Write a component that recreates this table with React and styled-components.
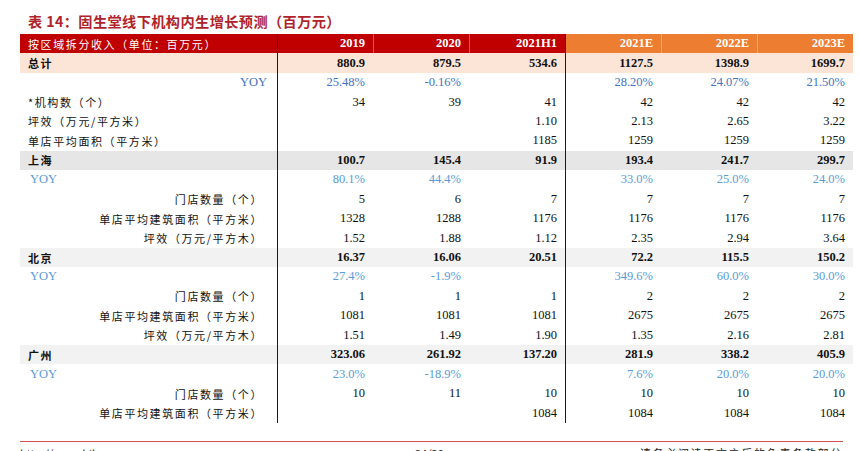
import React from 'react';
import styled, { createGlobalStyle } from 'styled-components';

const GlobalStyle = createGlobalStyle`
  html, body {
    margin: 0;
    padding: 0;
    background: #ffffff;
  }
`;

const Page = styled.div`
  width: 859px;
  height: 451px;
  overflow: hidden;
  padding: 0 6px 0 20px;
  box-sizing: border-box;
  font-family: "Liberation Serif", "Noto Sans CJK SC", serif;
`;

const Title = styled.h1`
  margin: 0;
  height: 34px;
  padding: 12px 0 0 8px;
  box-sizing: border-box;
  font-family: "Noto Sans CJK SC", sans-serif;
  font-size: 14.2px;
  line-height: 18px;
  font-weight: 700;
  color: #b0232a;
  letter-spacing: 0.4px;
`;

const Grid = styled.div`
  display: grid;
  grid-template-columns: 257px repeat(6, 96px);
  grid-auto-rows: 19.45px;
`;

const rowBg = {
  header: 'transparent',
  total: '#fce4d6',
  city: '#e6e6e6',
  cityLight: '#f2f2f2',
  plain: 'transparent',
};

const Cell = styled.div`
  display: flex;
  align-items: center;
  box-sizing: border-box;
  white-space: nowrap;
  background: ${p => rowBg[p.$row] || 'transparent'};
  border-left: ${p => (p.$divider ? '1px solid #1a1a1a' : p.$soft ? '1px solid rgba(255,255,255,0.35)' : 'none')};
`;

const LabelCell = styled(Cell)`
  justify-content: ${p => (p.$right ? 'flex-end' : 'flex-start')};
  padding: ${p => (p.$right ? `0 ${p.$pad}px 0 0` : `0 0 0 ${p.$pad}px`)};
  font-family: ${p => (p.$latin ? '"Liberation Serif", serif' : '"Noto Sans CJK SC", sans-serif')};
  font-size: ${p => (p.$latin ? '12.5px' : '11px')};
  letter-spacing: ${p => (p.$latin ? '0' : '1.6px')};
  font-weight: ${p => (p.$bold ? 700 : 400)};
  color: ${p => p.$color || '#111'};
  background: ${p => (p.$row === 'header' ? '#c00000' : rowBg[p.$row] || 'transparent')};
`;

const ValueCell = styled(Cell)`
  justify-content: flex-end;
  padding-right: 8px;
  font-family: "Liberation Serif", serif;
  font-size: 12.5px;
  font-weight: ${p => (p.$bold ? 700 : 400)};
  color: ${p => p.$color || '#111'};
  background: ${p =>
    p.$row === 'header' ? (p.$forecast ? '#ed7d31' : '#c00000') : rowBg[p.$row] || 'transparent'};
`;

const Footer = styled.div`
  margin: 18px 10px 0 0;
  border-top: 1px solid #d2504f;
  display: grid;
  grid-template-columns: 395px 1fr auto;
  padding-top: 4px;
  font-family: "Noto Sans CJK SC", sans-serif;
  font-size: 11px;
  line-height: 14px;
  color: #222;
`;

const FooterText = styled.span`
  letter-spacing: ${p => (p.$spaced ? '1.7px' : '0')};
  white-space: nowrap;
`;

const HEAD = ['2019', '2020', '2021H1', '2021E', '2022E', '2023E'];

const DARK_BLUE = '#4472c4';
const LIGHT_BLUE = '#5b9bd5';

const rows = [
  { kind: 'total', label: '总计', vals: ['880.9', '879.5', '534.6', '1127.5', '1398.9', '1699.7'] },
  { kind: 'yoyTop', label: 'YOY', vals: ['25.48%', '-0.16%', '', '28.20%', '24.07%', '21.50%'] },
  { kind: 'sub', label: '*机构数（个）', vals: ['34', '39', '41', '42', '42', '42'] },
  { kind: 'sub', label: '坪效（万元/平方米）', vals: ['', '', '1.10', '2.13', '2.65', '3.22'] },
  { kind: 'sub', label: '单店平均面积（平方米）', vals: ['', '', '1185', '1259', '1259', '1259'] },
  { kind: 'city', bg: 'city', label: '上海', vals: ['100.7', '145.4', '91.9', '193.4', '241.7', '299.7'] },
  { kind: 'yoy', label: 'YOY', vals: ['80.1%', '44.4%', '', '33.0%', '25.0%', '24.0%'] },
  { kind: 'subRight', label: '门店数量（个）', vals: ['5', '6', '7', '7', '7', '7'] },
  { kind: 'subRight', label: '单店平均建筑面积（平方米）', vals: ['1328', '1288', '1176', '1176', '1176', '1176'] },
  { kind: 'subRight', label: '坪效（万元/平方木）', vals: ['1.52', '1.88', '1.12', '2.35', '2.94', '3.64'] },
  { kind: 'city', bg: 'cityLight', label: '北京', vals: ['16.37', '16.06', '20.51', '72.2', '115.5', '150.2'] },
  { kind: 'yoy', label: 'YOY', vals: ['27.4%', '-1.9%', '', '349.6%', '60.0%', '30.0%'] },
  { kind: 'subRight', label: '门店数量（个）', vals: ['1', '1', '1', '2', '2', '2'] },
  { kind: 'subRight', label: '单店平均建筑面积（平方米）', vals: ['1081', '1081', '1081', '2675', '2675', '2675'] },
  { kind: 'subRight', label: '坪效（万元/平方木）', vals: ['1.51', '1.49', '1.90', '1.35', '2.16', '2.81'] },
  { kind: 'city', bg: 'cityLight', label: '广州', vals: ['323.06', '261.92', '137.20', '281.9', '338.2', '405.9'] },
  { kind: 'yoy', label: 'YOY', vals: ['23.0%', '-18.9%', '', '7.6%', '20.0%', '20.0%'] },
  { kind: 'subRight', label: '门店数量（个）', vals: ['10', '11', '10', '10', '10', '10'] },
  { kind: 'subRight', label: '单店平均建筑面积（平方米）', vals: ['', '', '1084', '1084', '1084', '1084'] },
];

function labelProps(r) {
  switch (r.kind) {
    case 'total':
      return { $row: 'total', $pad: 8, $bold: true };
    case 'yoyTop':
      return { $right: true, $pad: 10, $latin: true, $color: DARK_BLUE };
    case 'yoy':
      return { $pad: 10, $latin: true, $color: LIGHT_BLUE };
    case 'city':
      return { $row: r.bg, $pad: 8, $bold: true };
    case 'subRight':
      return { $right: true, $pad: 14 };
    default:
      return { $pad: 8 };
  }
}

function valueProps(r) {
  switch (r.kind) {
    case 'total':
      return { $row: 'total', $bold: true };
    case 'yoyTop':
      return { $color: DARK_BLUE };
    case 'yoy':
      return { $color: LIGHT_BLUE };
    case 'city':
      return { $row: r.bg, $bold: true };
    default:
      return {};
  }
}

export default function App() {
  return (
    <Page>
      <GlobalStyle />
      <Title>表 14：固生堂线下机构内生增长预测（百万元）</Title>
      <Grid>
        <LabelCell $row="header" $pad={8} $color="#fff">按区域拆分收入（单位：百万元）</LabelCell>
        {HEAD.map((h, i) => (
          <ValueCell
            key={h}
            $row="header"
            $bold
            $color="#fff"
            $forecast={i >= 3}
            $divider={i === 0 || i === 3}
            $soft={i !== 0 && i !== 3}
          >
            {h}
          </ValueCell>
        ))}
        {rows.map((r, ri) => (
          <React.Fragment key={ri}>
            <LabelCell {...labelProps(r)}>{r.label}</LabelCell>
            {r.vals.map((v, i) => (
              <ValueCell key={i} {...valueProps(r)} $divider={i === 0 || i === 3}>
                {v}
              </ValueCell>
            ))}
          </React.Fragment>
        ))}
      </Grid>
      <Footer>
        <FooterText>http://www.hibor.com.cn</FooterText>
        <FooterText>24/30</FooterText>
        <FooterText $spaced>请务必阅读正文之后的免责条款部分</FooterText>
      </Footer>
    </Page>
  );
}
